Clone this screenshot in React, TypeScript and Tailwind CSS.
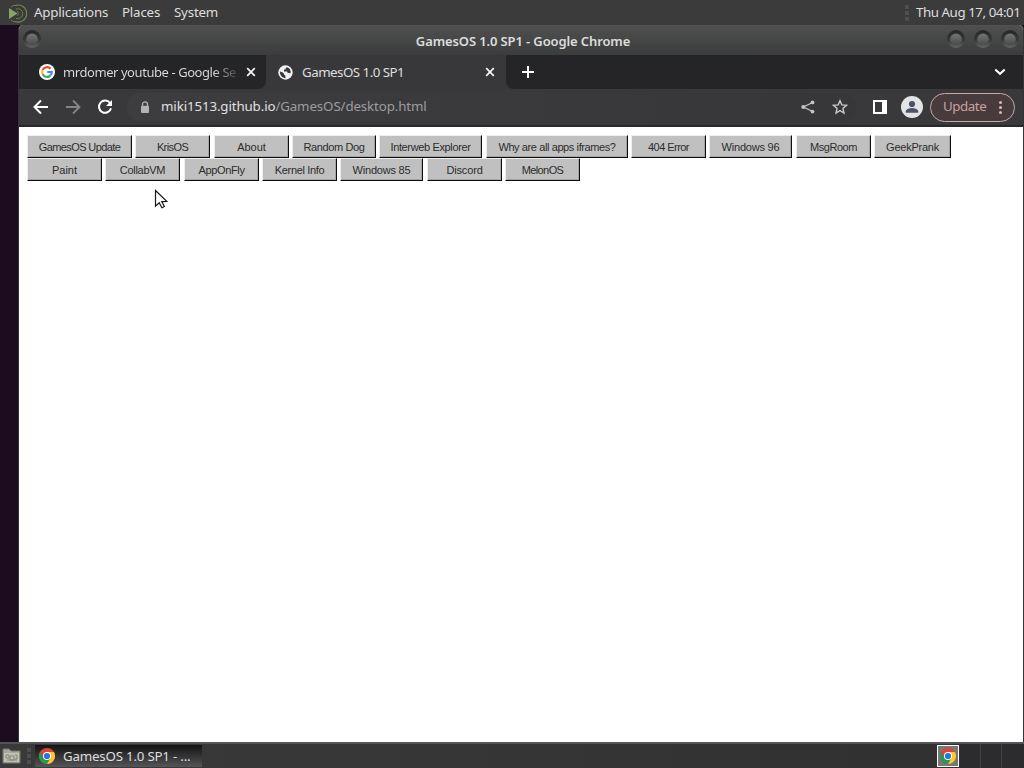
import React from "react";

const row1 = [
  ["GamesOS Update", "w-[105px] mr-[3px] tracking-[-0.6px]"],
  ["KrisOS", "w-[75px] mr-[4px] tracking-[-0.6px]"],
  ["About", "w-[75px] mr-[3px]"],
  ["Random Dog", "w-[84px] mr-[3px] tracking-[-0.4px]"],
  ["Interweb Explorer", "w-[103px] mr-[4px] tracking-[-0.36px]"],
  ["Why are all apps iframes?", "w-[142px] mr-[3px] tracking-[-0.4px]"],
  ["404 Error", "w-[75px] mr-[3px] tracking-[-0.55px]"],
  ["Windows 96", "w-[83px] mr-[4px] tracking-[-0.2px]"],
  ["MsgRoom", "w-[75px] mr-[3px] tracking-[-0.45px]"],
  ["GeekPrank", "w-[77px] tracking-[-0.25px]"],
];
const row2 = [
  ["Paint", "w-[75px] mr-[3px]"],
  ["CollabVM", "w-[75px] mr-[4px] tracking-[-0.3px]"],
  ["AppOnFly", "w-[75px] mr-[3px] tracking-[-0.35px]"],
  ["Kernel Info", "w-[75px] mr-[3px] tracking-[-0.35px]"],
  ["Windows 85", "w-[83px] mr-[4px] tracking-[-0.2px]"],
  ["Discord", "w-[75px] mr-[3px] tracking-[-0.15px]"],
  ["MelonOS", "w-[75px] tracking-[-0.6px]"],
];

function ButtonRow({ items }: { items: string[][] }) {
  return (
    <div className="flex h-[23px]">
      {items.map(([label, cls]) => (
        <button
          key={label}
          className={
            "flex h-[23px] shrink-0 items-center justify-center whitespace-nowrap border border-t-[#eeeeee] border-l-[#eeeeee] border-r-[#0c0c0c] border-b-[#0c0c0c] bg-[#c0c0c0] pt-[2px] font-['Liberation_Sans',Arial,sans-serif] text-[11px] leading-none text-[#2c2c2c] shadow-[inset_-1px_-1px_0_#a6a6a6] " +
            cls
          }
        >
          {label}
        </button>
      ))}
    </div>
  );
}

function Knob({ id }: { id: string }) {
  return (
    <svg width="20" height="20" viewBox="0 0 20 20" className="shrink-0">
      <defs>
        <linearGradient id={id + "r"} x1="0" y1="0" x2="0" y2="1">
          <stop offset="0" stopColor="#262626" />
          <stop offset="0.55" stopColor="#373838" />
          <stop offset="1" stopColor="#646664" />
        </linearGradient>
        <linearGradient id={id + "c"} x1="0" y1="0" x2="0" y2="1">
          <stop offset="0" stopColor="#747674" />
          <stop offset="1" stopColor="#494a4a" />
        </linearGradient>
      </defs>
      <circle cx="10" cy="10" r="9" fill={`url(#${id}r)`} />
      <circle cx="10" cy="10.3" r="5.8" fill={`url(#${id}c)`} />
    </svg>
  );
}

function Chrome() {
  return (
    <svg width="16" height="16" viewBox="0 0 16 16" className="shrink-0">
      <circle cx="8" cy="8" r="8" fill="#dc4438" />
      <path d="M1.07 4A8 8 0 0 0 8 16l3.46-6L8 8 4.54 10z" fill="#239b55" />
      <path d="M14.93 4A8 8 0 0 1 8 16l3.46-6L8 4z" fill="#fdc72e" />
      <circle cx="8" cy="8" r="4" fill="#fff" />
      <circle cx="8" cy="8" r="3.1" fill="#2675df" />
    </svg>
  );
}

function Close() {
  return (
    <svg width="10" height="10" viewBox="0 0 10 10" className="shrink-0">
      <path d="m1.2 1.2 7.6 7.6m0-7.6L1.2 8.8" stroke="#f2f2f2" strokeWidth="1.8" />
    </svg>
  );
}

function GoogleIcon() {
  return (
    <svg width="16" height="16" viewBox="0 0 16 16" className="shrink-0">
      <circle cx="8" cy="8" r="8" fill="#fff" />
      <g fill="none" strokeWidth="2.1">
        <path d="M11.6 4.7A4.9 4.9 0 0 0 3.6 5.9" stroke="#ea4335" />
        <path d="M3.6 5.9a4.9 4.9 0 0 0 0 4.2" stroke="#fbbc05" />
        <path d="M3.6 10.1a4.9 4.9 0 0 0 7.7 1.5" stroke="#34a853" />
        <path d="M11.3 11.6A4.7 4.7 0 0 0 12.8 8H8.2" stroke="#4285f4" />
      </g>
    </svg>
  );
}

export default function App() {
  return (
    <div className="relative flex h-[768px] w-[1024px] flex-col overflow-hidden bg-[#1d0b20] font-['Noto_Sans',sans-serif] text-[13.33px] leading-none text-[#dedede]">
      <header className="flex h-[25px] shrink-0 items-center bg-[#3b3b3c]">
        <svg width="22" height="22" viewBox="0 0 22 22" className="ml-[6px] shrink-0" fill="none">
          <path d="M3 6v11l8.5-5.5z" fill="#87a467" />
          <path d="M9 3.7a8.5 8.5 0 1 1 0 15.8" stroke="#748b4e" strokeWidth="1.1" />
          <path d="M10 7a5 5 0 1 1 0 9.4" stroke="#697e48" strokeWidth="1" />
          <path d="M11 9.2a2.5 2.5 0 0 1 0 4.5M5 5a9 9 0 0 1 4-2M5 18a9 9 0 0 0 4 2" stroke="#697e48" />
        </svg>
        <nav className="ml-[6px] flex tracking-[-0.2px]">
          <span className="w-[88px]">Applications</span>
          <span className="w-[52px]">Places</span>
          <span>System</span>
        </nav>
        <div className="ml-auto flex items-center">
          <div className="mr-[7px] flex flex-col gap-[2px]">
            <i className="h-[4px] w-[4px] bg-[#4e4e50]" />
            <i className="h-[4px] w-[4px] bg-[#4e4e50]" />
            <i className="h-[4px] w-[4px] bg-[#4e4e50]" />
          </div>
          <time className="w-[108px] whitespace-nowrap tracking-[-0.45px]">Thu Aug 17, 04:01</time>
        </div>
      </header>

      <div className="flex h-[717px] shrink-0">
        <div className="w-[18px] shrink-0 bg-[#1d0b20]" />
        <main className="flex w-[1006px] flex-col overflow-hidden rounded-t-[5px] border-x border-[#343436] bg-white">
          <div className="flex h-[30px] shrink-0 items-center bg-linear-to-b from-[#505051] to-[#3b3c3c] pb-[3px]">
            <div className="ml-[3px] w-[60px]">
              <Knob id="menu" />
            </div>
            <h1 className="grow pt-[5px] pl-[18px] text-center text-[13px] font-semibold tracking-[-0.12px] text-[#dddddd]">
              GamesOS 1.0 SP1 - Google Chrome
            </h1>
            <div className="mr-[3px] flex gap-[7px]">
              <Knob id="min" />
              <Knob id="max" />
              <Knob id="close" />
            </div>
          </div>

          <div className="flex h-[34px] shrink-0 bg-[#38383a]">
            <div className="flex w-[247px] items-center rounded-br-[8px] bg-[#252527]">
              <div className="ml-[20px]">
                <GoogleIcon />
              </div>
              <span className="ml-[8px] h-[18px] w-[174px] bg-linear-to-r from-[#dddddd] from-86% to-[#444446] bg-clip-text pt-[3px] text-[13px] tracking-[-0.43px] whitespace-nowrap text-transparent">
                mrdomer youtube - Google Se
              </span>
              <div className="ml-[9px]">
                <Close />
              </div>
            </div>
            <div className="flex w-[240px] items-center rounded-t-[8px] bg-[#38383a]">
              <svg width="15" height="15" viewBox="0 0 15 15" className="ml-[12px] shrink-0">
                <circle cx="7.5" cy="7.5" r="7.2" fill="#f1f1f1" />
                <path d="M2 6.6 4.2 7.2 6 8.4v1.4l1.4.8v2.6C4.3 13.2 1.8 10.5 2 6.6M9 2.2 7.6 3v1.6H6v1.8h3.2v1.2l1.6.5 1.8.1C13.2 5.2 11.6 3 9 2.2" fill="#38383a" />
              </svg>
              <span className="ml-[9px] w-[183px] pt-[2px] tracking-[-0.52px]">GamesOS 1.0 SP1</span>
              <Close />
            </div>
            <div className="flex grow items-center rounded-bl-[8px] bg-[#252527]">
              <svg width="14" height="14" viewBox="0 0 14 14" className="ml-[15px]">
                <path d="M7 1v12M1 7h12" stroke="#fff" strokeWidth="2" />
              </svg>
              <svg width="12" height="8" viewBox="0 0 12 8" className="mr-[17px] ml-auto">
                <path d="m1.3 1.4 4.7 4.4 4.7-4.4" fill="none" stroke="#fff" strokeWidth="2" />
              </svg>
            </div>
          </div>

          <div className="flex h-[38px] shrink-0 items-center border-b-2 border-[#29292b] bg-[#39393c]">
            <svg width="16" height="16" viewBox="0 0 16 16" className="ml-[14px]" fill="none">
              <path d="M15 8H2m6-6.5L1.5 8 8 14.5" stroke="#fff" strokeWidth="2" />
            </svg>
            <svg width="16" height="16" viewBox="0 0 16 16" className="ml-[16px]" fill="none">
              <path d="M1 8h13M8 1.5 14.5 8 8 14.5" stroke="#858587" strokeWidth="1.8" />
            </svg>
            <svg width="16" height="16" viewBox="0 0 16 16" className="ml-[16px]" fill="none">
              <path d="M13.1 4.2A6.1 6.1 0 1 0 14 9.2" stroke="#fff" strokeWidth="2" />
              <path d="M15 1v6H9z" fill="#fff" />
            </svg>
            <div className="ml-[14px] flex h-[28px] w-[730px] items-center rounded-full bg-linear-to-r from-[#3d3d40] to-[#373739]">
              <svg width="10" height="13" viewBox="0 0 10 13" className="ml-[13px]">
                <path d="M2.5 5V3.4a2.5 2.5 0 0 1 5 0V5" fill="none" stroke="#b2b2b3" strokeWidth="1.3" />
                <rect x="1" y="4.7" width="8" height="7.3" rx="1" fill="#b2b2b3" />
              </svg>
              <span className="ml-[11px] text-[13.33px] tracking-[-0.13px] text-[#9d9da0]">
                <span className="text-[#e0e0e1]">miki1513.github.io</span>/GamesOS/desktop.html
              </span>
              <svg width="14" height="14" viewBox="0 0 14 14" className="mr-[17px] ml-auto">
                <path d="M11.7 2.5 2.3 7l9.4 4.5" fill="none" stroke="#c4c4c5" strokeWidth="1.3" />
                <circle cx="2.3" cy="7" r="2" fill="#c4c4c5" />
                <circle cx="11.5" cy="2.4" r="1.9" fill="#c4c4c5" />
                <circle cx="11.5" cy="11.6" r="1.9" fill="#c4c4c5" />
              </svg>
              <svg width="16" height="16" viewBox="0 0 16 16" className="mr-[9px]">
                <path d="m8 1.7 1.8 4.2 4.7.4-3.6 3.1L12 14l-4-2.4L4 14l1.1-4.6-3.6-3.1 4.7-.4z" fill="none" stroke="#c7c7c8" strokeWidth="1.4" />
              </svg>
            </div>
            <div className="ml-[16px] h-[14px] w-[14px] border-y-2 border-r-[5px] border-l-2 border-white" />
            <svg width="22" height="22" viewBox="0 0 22 22" className="ml-[14px] shrink-0">
              <circle cx="11" cy="11" r="11" fill="#e2e4e8" />
              <circle cx="11" cy="8" r="3.1" fill="#4c5464" />
              <path d="M4.8 16.7v-1.2c0-2.3 4-3.4 6.2-3.4s6.2 1.1 6.2 3.4v1.2z" fill="#4c5464" />
            </svg>
            <button className="ml-[7px] flex h-[29px] w-[85px] shrink-0 items-center rounded-full border border-[#c4a9a7] bg-[#483b3d] text-[#c8a19f]">
              <span className="ml-[12px] w-[56px] text-left tracking-[-0.45px]">Update</span>
              <span className="flex flex-col gap-[2px]">
                <i className="h-[3px] w-[3px] rounded-full bg-[#dab5b2]" />
                <i className="h-[3px] w-[3px] rounded-full bg-[#dab5b2]" />
                <i className="h-[3px] w-[3px] rounded-full bg-[#dab5b2]" />
              </span>
            </button>
          </div>

          <section className="grow bg-white pt-[8px] pl-[8px]">
            <ButtonRow items={row1} />
            <ButtonRow items={row2} />
          </section>
        </main>
      </div>

      <footer className="flex h-[26px] shrink-0 items-center border-t-2 border-[#555557] bg-linear-to-r from-[#3a3a3b] to-[#303031]">
        <svg width="20" height="20" viewBox="0 0 20 20" className="ml-[2px]">
          <path d="M1 3h6l2 2h9v12H1z" fill="#aaa99b" stroke="#77776e" />
          <path d="M2 7h15v9H2z" fill="#c0c1b4" />
          <path d="M4 9h3v3H4zm4 1h4v4H8zm5-1h2v4h-2M5 14h10" fill="none" stroke="#85867a" />
        </svg>
        <div className="ml-[5px] flex flex-col gap-[2px]">
          <i className="h-[4px] w-[4px] bg-[#4e4e50]" />
          <i className="h-[4px] w-[4px] bg-[#4e4e50]" />
          <i className="h-[4px] w-[4px] bg-[#4e4e50]" />
        </div>
        <div className="ml-[4px] flex h-[22px] w-[167px] items-center bg-linear-to-b from-[#151516] to-[#555557]">
          <div className="ml-[4px]">
            <Chrome />
          </div>
          <span className="ml-[8px] pt-[2px] tracking-[-0.22px] whitespace-nowrap">GamesOS 1.0 SP1 - ...</span>
        </div>
        <div className="ml-auto flex h-[22px] w-[22px] items-center justify-center border border-white bg-[#777775]">
          <Chrome />
        </div>
        <div className="ml-[1px] flex h-[24px] w-[64px] bg-[#2c2c2e]">
          <div className="ml-[20px] w-[22px] border-x border-[#414142]" />
        </div>
      </footer>

      <svg width="14" height="20" viewBox="0 0 14 20" className="absolute top-[189px] left-[154px]">
        <path d="M1.5 1.5v15.7l3.7-3.5 2.7 5 2.5-1.2-2.7-4.9 5-.2z" fill="#fff" stroke="#171719" strokeWidth="1.2" />
      </svg>
    </div>
  );
}
